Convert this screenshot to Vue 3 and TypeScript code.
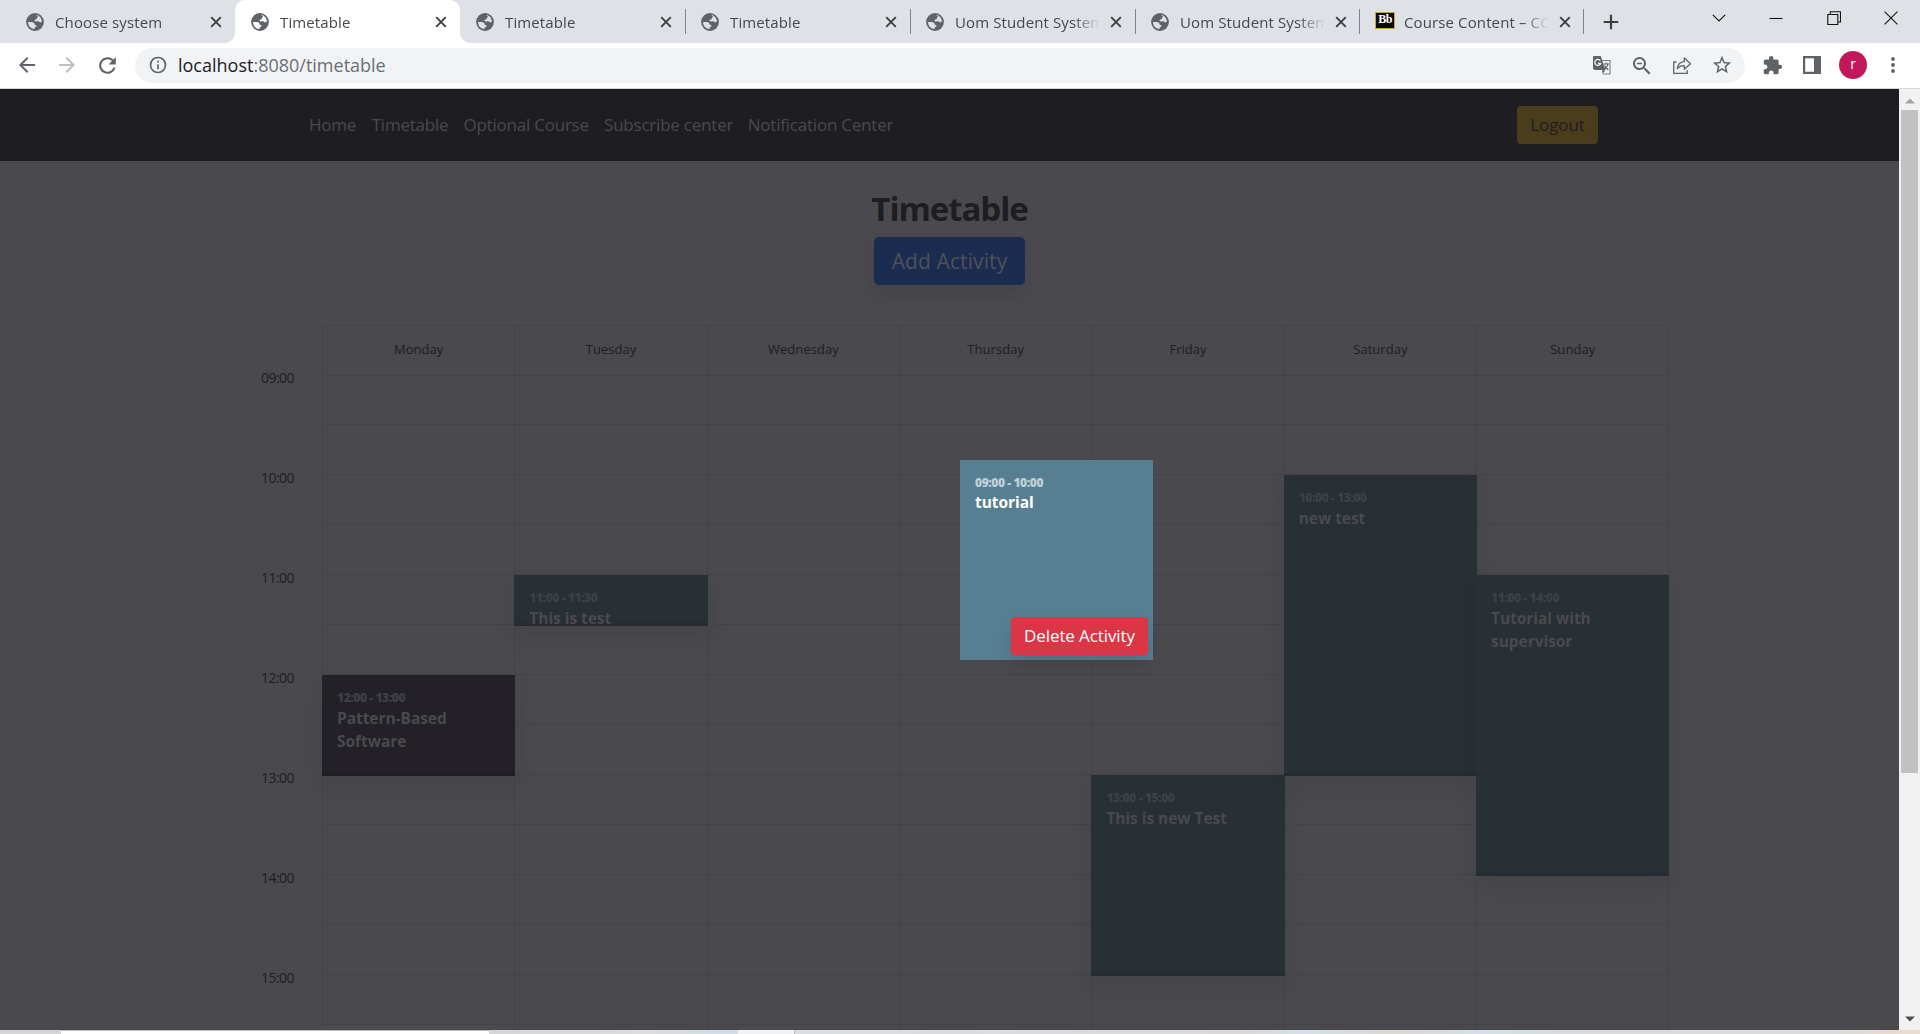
<script setup lang="ts">
interface Tab { title: string; width: number; active?: boolean; bb?: boolean; sep?: boolean }
interface Activity { day: number; start: number; length: number; time: string; name: string; purple?: boolean }

const tabs: Tab[] = [
  { title: 'Choose system', width: 225 },
  { title: 'Timetable', width: 225, active: true },
  { title: 'Timetable', width: 225, sep: true },
  { title: 'Timetable', width: 225, sep: true },
  { title: 'Uom Student System', width: 225, sep: true },
  { title: 'Uom Student System', width: 224, sep: true },
  { title: 'Course Content – CO', width: 224, sep: true, bb: true },
]
const links: { label: string; width: number }[] = [
  { label: 'Home', width: 47 },
  { label: 'Timetable', width: 76 },
  { label: 'Optional Course', width: 125 },
  { label: 'Subscribe center', width: 128 },
  { label: 'Notification Center', width: 147 },
]
const days = ['Monday', 'Tuesday', 'Wednesday', 'Thursday', 'Friday', 'Saturday', 'Sunday']
const hours = ['09:00', '10:00', '11:00', '12:00', '13:00', '14:00', '15:00']
const rows = 14
// start and length are counted in half-hour rows from 09:00
const activities: Activity[] = [
  { day: 0, start: 6, length: 2, time: '12:00 - 13:00', name: 'Pattern-Based Software', purple: true },
  { day: 1, start: 4, length: 1, time: '11:00 - 11:30', name: 'This is test' },
  { day: 4, start: 8, length: 4, time: '13:00 - 15:00', name: 'This is new Test' },
  { day: 5, start: 2, length: 6, time: '10:00 - 13:00', name: 'new test' },
  { day: 6, start: 4, length: 6, time: '11:00 - 14:00', name: 'Tutorial with supervisor' },
]
const forDay = (d: number) => activities.filter((a) => a.day === d)
</script>

<template>
  <div class="window">
    <div class="tabstrip">
      <div v-for="(t, i) in tabs" :key="i" class="tab" :class="{ active: t.active, sep: t.sep }" :style="{ width: t.width + 'px' }">
        <span v-if="t.bb" class="bb">Bb</span>
        <svg v-else class="globe" viewBox="0 0 18 18">
          <circle cx="9" cy="9" r="8.9" fill="#5f6368" />
          <path class="land" d="M10.6 2.1c2.9.6 5.2 3.2 5.3 6.5-.7.9-1.5 1-2.3.4-.6-.5-1.3-.8-2.2-.7l-1.9.1c-.7-.1-1.2-.7-.9-1.4.3-.6 1-.8 1.7-.8.5-.1.7-.4.6-.9 0-.7.4-1 1-1.2.3-.3.2-.7-.3-.9-.6-.2-1-.6-1-1.1zM2.1 9c1.500-.1 3.300-.1 4.700.3 1 .3 1.700.9 1.700 1.800 0 .6.4.8 1 .8.900.1 1.200.6 1 1.300-.2.5-.5.8-1.100.8-.5 0-.7.3-.7.9v1.100C4.900 16 2 13 2.100 9z" />
        </svg>
        <span class="tab-title">{{ t.title }}</span>
        <svg class="tab-close" viewBox="0 0 12 12"><path d="M1.200 1.200l9.600 9.600M10.800 1.200l-9.600 9.600" /></svg>
      </div>
      <svg class="plus" viewBox="0 0 16 16"><path d="M8 .7v14.600M.7 8h14.600" /></svg>
      <div class="winctl">
        <svg viewBox="0 0 14 14"><path d="M.8 3.800L7 10l6.200-6.200" /></svg>
        <svg viewBox="0 0 14 14"><path d="M.5 7.500h13" /></svg>
        <svg viewBox="0 0 14 14"><path d="M.8 3.500h10v10h-10zM3.300 3.200V.8h10.200v10.200h-2.600" /></svg>
        <svg viewBox="0 0 14 14"><path d="M.6.6l12.800 12.800M13.400.6L.6 13.400" /></svg>
      </div>
    </div>

    <div class="toolbar">
      <svg class="ic nav-i" viewBox="0 0 24 24"><path d="M20 11H7.830l5.590-5.590L12 4l-8 8 8 8 1.410-1.410L7.830 13H20z" /></svg>
      <svg class="ic nav-i dim" viewBox="0 0 24 24"><path d="M4 11h12.170l-5.590-5.590L12 4l8 8-8 8-1.410-1.410L16.170 13H4z" /></svg>
      <svg class="ic reload" viewBox="0 0 24 24"><path d="M17.650 6.350A8 8 0 1 0 19.730 14h-2.080A6 6 0 1 1 12 6c1.660 0 3.140.69 4.220 1.780L13 11h7V4z" /></svg>
      <div class="omnibox">
        <svg class="ic info" viewBox="0 0 24 24"><path d="M11 7h2v2h-2zm0 4h2v6h-2zm1-9a10 10 0 1 0 0 20 10 10 0 0 0 0-20zm0 18a8 8 0 1 1 0-16 8 8 0 0 1 0 16z" /></svg>
        <span class="url"><b>localhost</b>:8080/timetable</span>
        <div class="actions">
          <svg class="ic translate" viewBox="0 0 20 20">
            <path d="M7.500 5.500h10.500v13.500H10.500" fill="none" stroke="#80868b" stroke-width="1.200" />
            <path d="M1.500 1h7.200l4.800 14H2.500L1 13.500V1.500z" />
            <path d="M10 15.200h3.400l-2.700 3.600z" />
            <path d="M8.300 5.700A3 3 0 1 0 8.700 8.300H6" fill="none" stroke="#f1f3f4" stroke-width="1.300" />
            <path d="M11.500 9h5.500M14.200 7.500V9M16 9c-.5 2.200-1.500 3.800-3 5M12.700 10.500c.8 1.800 2 3.200 3.600 4.500" fill="none" stroke="#5f6368" stroke-width="1.100" />
          </svg>
          <svg class="ic mag" viewBox="0 0 24 24"><path d="M15.500 14h-.79l-.28-.27A6.500 6.500 0 1 0 13.730 14.430l.27.28v.79l5 4.990L20.490 19zm-6 0a4.500 4.500 0 1 1 0-9 4.500 4.500 0 0 1 0 9zM7 8.800h5v1.400H7z" /></svg>
          <svg class="ic share" viewBox="0 0 20 20"><path d="M4.500 7H1.700v11.300h13.600v-3M5.200 13.500C5.800 9.500 8 7 12.300 6.700V3l6.200 5.800-6.200 5.500v-3.600c-3-.1-5.300.8-7.100 2.800z" fill="none" stroke="#5f6368" stroke-width="1.300" stroke-linejoin="round" /></svg>
          <svg class="ic star" viewBox="0 0 24 24"><path d="M22 9.240l-7.190-.62L12 2 9.190 8.630 2 9.240l5.460 4.730L5.820 21 12 17.270 18.180 21l-1.630-7.030zM12 15.400l-3.760 2.270 1-4.280-3.320-2.880 4.380-.38L12 6.100l1.710 4.040 4.380.38-3.320 2.880 1 4.280z" /></svg>
        </div>
      </div>
      <svg class="ic puzzle" viewBox="0 0 24 24"><path d="M20.500 11H19V7c0-1.100-.9-2-2-2h-4V3.500a2.500 2.500 0 0 0-5 0V5H4c-1.100 0-1.990.9-1.990 2v3.800H3.500c1.490 0 2.700 1.210 2.700 2.700s-1.210 2.700-2.700 2.700H2V20c0 1.100.9 2 2 2h3.800v-1.500c0-1.490 1.210-2.700 2.700-2.700s2.700 1.210 2.700 2.700V22H17c1.100 0 2-.9 2-2v-4h1.500a2.500 2.500 0 0 0 0-5z" /></svg>
      <svg class="ic panel" viewBox="0 0 18 18"><path d="M0 0h18v18H0zM2.200 2.200v13.600h8.800V2.200z" fill-rule="evenodd" /></svg>
      <span class="avatar">r</span>
      <svg class="ic dots" viewBox="0 0 4 16"><circle cx="2" cy="2" r="1.900" /><circle cx="2" cy="8" r="1.900" /><circle cx="2" cy="14" r="1.900" /></svg>
    </div>

    <div class="viewport">
      <div class="page">
        <nav class="navbar">
          <a v-for="l in links" :key="l.label" :style="{ width: l.width + 'px' }">{{ l.label }}</a>
          <button class="logout">Logout</button>
        </nav>
        <h1>Timetable</h1>
        <button class="add">Add Activity</button>
        <div class="schedule">
          <div class="times"><span v-for="h in hours" :key="h">{{ h }}</span></div>
          <div class="days">
            <div v-for="(d, i) in days" :key="d" class="day">
              <div class="day-head">{{ d }}</div>
              <div class="slots">
                <div v-for="r in rows" :key="r" class="slot"></div>
                <div v-for="a in forDay(i)" :key="a.name" class="event" :class="{ purple: a.purple }" :style="{ top: a.start * 50 + 'px', height: a.length * 50 + 1 + 'px' }">
                  <span class="when">{{ a.time }}</span>
                  <span class="name">{{ a.name }}</span>
                </div>
              </div>
            </div>
          </div>
        </div>
        <div class="modal">
          <span class="when">09:00 - 10:00</span>
          <span class="name">tutorial</span>
          <button class="delete">Delete Activity</button>
        </div>
      </div>
      <div class="scrollbar">
        <svg viewBox="0 0 10 6"><path d="M0 5.500L5 .5l5 5z" fill="#a3a3a3" /></svg>
        <div class="thumb"></div>
        <svg class="down" viewBox="0 0 10 6"><path d="M0 .5l5 5 5-5z" fill="#505050" /></svg>
      </div>
    </div>
    <div class="taskbar"><div class="search"></div><div class="task"></div></div>
  </div>
</template>

<style>
body { margin: 0; overflow: hidden; }
</style>

<style scoped>
* { box-sizing: border-box; }
.window { width: 1920px; height: 1034px; display: flex; flex-direction: column; overflow: hidden; font-family: "Open Sans", "Noto Sans", sans-serif; background: #fff; }
button { font-family: inherit; border: 0; padding: 0; white-space: nowrap; }
svg { display: block; flex: none; }

.tabstrip { height: 43px; flex: none; background: #dee1e6; display: flex; padding-left: 10px; }
.tab { position: relative; flex: none; height: 43px; display: flex; align-items: center; padding-left: 16px; }
.tab.active { background: #fff; border-radius: 10px 10px 0 0; }
.tab.active::before, .tab.active::after { content: ""; position: absolute; bottom: 0; width: 10px; height: 10px; }
.tab.active::before { left: -10px; background: radial-gradient(circle at 0 0, transparent 9.500px, #fff 10px); }
.tab.active::after { right: -10px; background: radial-gradient(circle at 100% 0, transparent 9.500px, #fff 10px); }
.tab.sep::after { content: ""; position: absolute; right: -1px; top: 9px; width: 1px; height: 25px; background: #808387; }
.globe { width: 18px; height: 18px; }
.land { fill: #dee1e6; }
.active .land { fill: #fff; }
.bb { width: 20px; height: 17px; margin: 0 -2px 2px 0; background: #0b0b0b; border: 1.500px solid #c8a43a; color: #fff; font: bold 12px/13px "Liberation Serif", serif; text-align: center; letter-spacing: -.5px; }
.tab-title { width: 146px; margin-left: 11px; overflow: hidden; white-space: nowrap; font-size: 15px; line-height: 24px; letter-spacing: .12px; color: #45494d; -webkit-mask-image: linear-gradient(90deg, #000 118px, transparent 145px); mask-image: linear-gradient(90deg, #000 118px, transparent 145px); }
.tab-close { width: 12px; height: 12px; margin-left: 9px; fill: none; stroke: #3c4043; stroke-width: 1.900; }
.plus { width: 16px; height: 16px; margin: 13.500px 0 0 20px; fill: none; stroke: #3c4043; stroke-width: 2.200; }
.winctl { display: flex; gap: 43.300px; margin: 11px 0 0 93px; }
.winctl svg { width: 14px; height: 14px; fill: none; stroke: #111; stroke-width: 1.100; }

.toolbar { height: 46px; flex: none; display: flex; align-items: center; border-bottom: 1px solid #d5d6d8; padding-left: 15px; }
.ic { fill: #5f6368; margin-bottom: 1px; }
.nav-i { width: 24px; height: 24px; margin-right: 16px; }
.dim { fill: #bcbec1; }
.reload { width: 25px; height: 25px; margin-right: 15px; }
.omnibox { width: 1610px; height: 35px; border-radius: 18px; background: #f1f3f4; display: flex; align-items: center; padding: 0 13px; flex: none; }
.info { width: 20px; height: 20px; }
.url { margin: 0 0 2px 10px; font-size: 18px; letter-spacing: 0; color: #6b6f73; white-space: nowrap; }
.url b { font-weight: 400; color: #202124; }
.actions { margin-left: auto; display: flex; align-items: center; gap: 20px; }
.actions .ic { width: 20px; height: 20px; }
.actions .mag { width: 24px; height: 24px; margin: 0 -2px; }
.actions .star { width: 22px; height: 22px; margin: 0 -1px 1px; }
.puzzle { width: 21px; height: 21px; margin-left: 17px; }
.panel { width: 18px; height: 18px; margin-left: 20px; }
.avatar { width: 28px; height: 28px; border-radius: 50%; margin: 0 0 1px 18px; background: #c2185b; color: #fff; font-size: 14px; line-height: 26px; text-align: center; }
.dots { width: 4px; height: 16px; margin-left: 24px; }

.viewport { height: 941px; flex: none; display: flex; }
.page { position: relative; width: 1899px; height: 941px; overflow: hidden; background: #4a494d; display: flex; flex-direction: column; align-items: center; color: #1e1d22; }
.navbar { width: 100%; height: 72px; flex: none; background: #1e1d22; display: flex; align-items: center; padding: 0 0 2px 309px; gap: 15.700px; }
.navbar a { color: #4a494d; font-size: 17px; white-space: nowrap; letter-spacing: -.22px; }
.logout { width: 81px; height: 38px; margin: 2px 301px 0 auto; padding-bottom: 2px; border-radius: 4px; background: #4a3d1b; color: #1e1d22; font-size: 17px; letter-spacing: -.1px; }
h1 { margin: 27px 0 0; flex: none; font-size: 33px; line-height: 42px; height: 45px; font-weight: 700; letter-spacing: -1.050px; }
.add { width: 151px; height: 48px; margin-top: 4px; flex: none; border-radius: 5px; background: #1a2c50; color: #4f5157; font-size: 21px; letter-spacing: .1px; box-shadow: 0 8px 16px rgba(30, 29, 34, .1); }
.schedule { width: 1428px; flex: none; margin: 40px 0 0 242px; display: flex; align-self: flex-start; }
.times { width: 80px; flex: none; padding: 42px 28px 0 0; display: flex; flex-direction: column; text-align: right; }
.times span { height: 100px; line-height: 22px; font-size: 14px; letter-spacing: -.55px; }
.days { width: 1347.400px; flex: none; display: flex; border-left: 1px solid #444347; }
.day { flex: 1; border-right: 1px solid #444347; min-width: 0; }
.day-head { height: 50px; border-top: 1px solid #444347; text-align: center; font-size: 13px; line-height: 47px; letter-spacing: .05px; }
.slots { position: relative; }
.slot { height: 50px; border-bottom: 1px solid #444347; }
.slot:first-child { border-top: 1px solid #444347; }
.event { position: absolute; left: -1px; right: -1px; background: #282f35; padding: 14px 15px 0; display: flex; flex-direction: column; color: #4a494d; box-shadow: 0 10px 20px rgba(30, 29, 34, .1), inset 0 -3px 0 #252b31; }
.event.purple { background: #232028; box-shadow: 0 10px 20px rgba(30, 29, 34, .1), inset 0 -3px 0 #201d25; }
.when { font-size: 12px; line-height: 18px; font-weight: 800; letter-spacing: -.4px; }
.event .when { color: #3d4046; }
.name { font-size: 15.500px; line-height: 20px; font-weight: 700; letter-spacing: -.05px; }
.event .name { line-height: 23px; }
.modal { position: absolute; left: 960px; top: 371px; width: 193px; height: 200px; background: #577f92; padding: 14px 15px; display: flex; flex-direction: column; color: #fff; }
.modal .when { color: #bfd0d7; }
.delete { position: absolute; right: 5px; bottom: 5px; width: 137px; height: 38px; padding-bottom: 2px; border-radius: 4px; background: #dc3545; color: #fff; font-size: 17px; letter-spacing: -.1px; box-shadow: 0 8px 16px rgba(0, 0, 0, .12); }
.scrollbar { width: 21px; background: #f1f1f1; display: flex; flex-direction: column; align-items: center; padding-top: 9px; }
.scrollbar svg { width: 10px; height: 6px; }
.thumb { width: 17px; height: 663px; margin-top: 6px; background: #c1c1c1; }
.down { margin-top: auto; margin-bottom: 8px; }
.taskbar { height: 4px; background: linear-gradient(90deg, #d5d5d5 0 490px, #dcdcdc 640px, #d2dce4 720px, #d8dee2 800px, #dcd9d8 1250px, #d3dfe6 1300px, #ddd8d5 1400px, #d3dfe6 1480px, #dadada 1600px 1840px, #e8dccb 1900px); display: flex; }
.search { width: 428px; margin-left: 61px; background: #fff; border-top: 1px solid #bbb; }
.task { width: 57px; margin-left: 249px; background: #f0f2f3; border-right: 1px solid #bbb; }
</style>
